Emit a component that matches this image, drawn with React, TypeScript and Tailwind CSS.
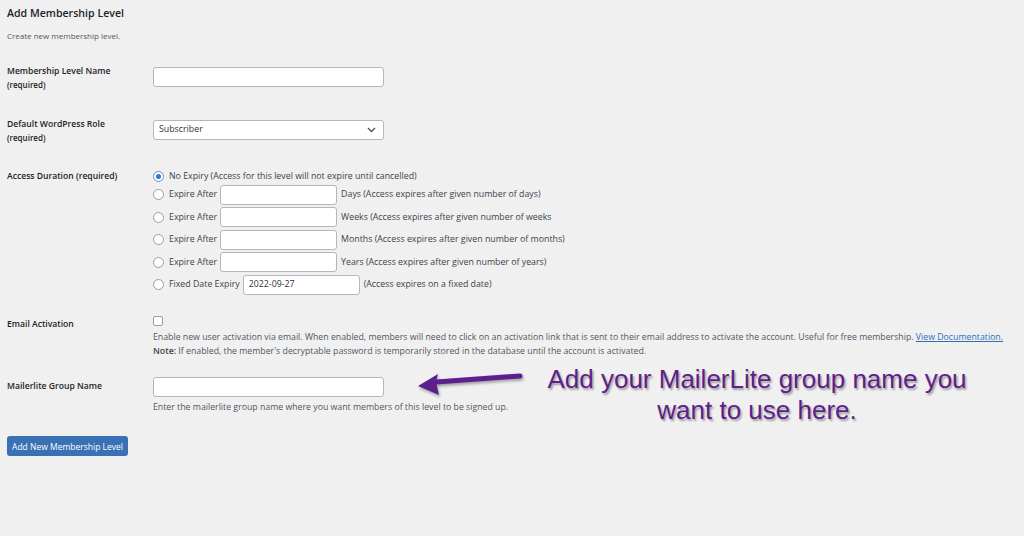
import React from "react";

const font = { fontFamily: '"Open Sans", "Noto Sans", sans-serif' };

function Radio({ checked }: { checked?: boolean }) {
  return (
    <span
      className={
        "flex h-[11px] w-[11px] shrink-0 items-center justify-center rounded-full border bg-white " +
        (checked ? "border-[#5b8fd0]" : "border-[#9a9da2]")
      }
    >
      {checked && <span className="h-[5px] w-[5px] rounded-full bg-[#3a74c4]" />}
    </span>
  );
}

function TextBox({ w, value }: { w: string; value?: string }) {
  return (
    <div
      className={
        "flex h-[20px] shrink-0 items-center rounded-[3px] border border-[#b4b7bb] bg-white px-[5px] text-[8.8px] text-[#2c3338] " +
        w
      }
    >
      {value}
    </div>
  );
}

function ExpireRow({ unit }: { unit: string }) {
  return (
    <div className="flex h-[20px] items-center">
      <Radio />
      <span className="ml-[5px] mr-[3px]">Expire After</span>
      <TextBox w="w-[117px]" />
      <span className="ml-[4px]">{unit}</span>
    </div>
  );
}

export default function App() {
  return (
    <div
      className="relative h-[536px] w-[1024px] overflow-hidden bg-[#f0f0f1] pl-[7px] text-[8.8px] leading-[13px] text-[#3c434a]"
      style={font}
    >
      <h1 className="pt-[5px] text-[10.6px] font-semibold leading-[16px] text-[#1d2327]">
        Add Membership Level
      </h1>
      <p className="mt-[9px] text-[8px] leading-[12px] text-[#50575e]">Create new membership level.</p>

      {/* Row 1 */}
      <div className="mt-[22.5px] flex">
        <div className="w-[146px] shrink-0 text-[8.6px] font-semibold text-[#1d2327]">
          <div>Membership Level Name</div>
          <div className="text-[8px]">(required)</div>
        </div>
        <div className="pt-[2.5px]">
          <TextBox w="w-[231px]" />
        </div>
      </div>

      {/* Row 2 */}
      <div className="mt-[27.5px] flex">
        <div className="w-[146px] shrink-0 text-[8.6px] font-semibold text-[#1d2327]">
          <div>Default WordPress Role</div>
          <div className="text-[8px]">(required)</div>
        </div>
        <div className="pt-[1.5px]">
          <div className="flex h-[20px] w-[231px] items-center justify-between rounded-[3px] border border-[#b4b7bb] bg-white pl-[5px] pr-[7px] text-[8.8px] text-[#2c3338]">
            <span>Subscriber</span>
            <svg width="9" height="6" viewBox="0 0 9 6">
              <path d="M1 1 L4.5 4.5 L8 1" fill="none" stroke="#50575e" strokeWidth="1.4" />
            </svg>
          </div>
        </div>
      </div>

      {/* Row 3 */}
      <div className="mt-[26px] flex">
        <div className="w-[146px] shrink-0 text-[8.6px] font-semibold text-[#1d2327]">Access Duration (required)</div>
        <div className="flex flex-col gap-[2.6px]">
          <div className="-mt-[0.5px] mb-[-0.6px] flex h-[13px] items-center">
            <Radio checked />
            <span className="ml-[5px]">No Expiry (Access for this level will not expire until cancelled)</span>
          </div>
          <ExpireRow unit="Days (Access expires after given number of days)" />
          <ExpireRow unit="Weeks (Access expires after given number of weeks" />
          <ExpireRow unit="Months (Access expires after given number of months)" />
          <ExpireRow unit="Years (Access expires after given number of years)" />
          <div className="flex h-[20px] items-center">
            <Radio />
            <span className="ml-[5px] mr-[3px]">Fixed Date Expiry</span>
            <TextBox w="w-[117px]" value="2022-09-27" />
            <span className="ml-[4px]">(Access expires on a fixed date)</span>
          </div>
        </div>
      </div>

      {/* Email activation */}
      <div className="mt-[21px] flex">
        <div className="w-[146px] shrink-0 pt-[2px] text-[8.6px] font-semibold text-[#1d2327]">Email Activation</div>
        <div className="min-w-0">
          <div className="mt-[0.5px] h-[10px] w-[10px] rounded-[2px] border border-[#9a9da2] bg-white" />
          <div className="mt-[5px] whitespace-nowrap text-[8.75px] text-[#50575e]">
            Enable new user activation via email. When enabled, members will need to click on an activation link that is
            sent to their email address to activate the account. Useful for free membership.{" "}
            <span className="text-[#2f6db5] underline">View Documentation.</span>
          </div>
          <div className="mt-[1px] whitespace-nowrap text-[8.75px] text-[#50575e]">
            <span className="font-semibold text-[#3c434a]">Note:</span> If enabled, the member's decryptable password is
            temporarily stored in the database until the account is activated.
          </div>
        </div>
      </div>

      {/* Mailerlite */}
      <div className="mt-[19px] flex">
        <div className="w-[146px] shrink-0 pt-[2.5px] text-[8.6px] font-semibold text-[#1d2327]">
          Mailerlite Group Name
        </div>
        <div>
          <TextBox w="w-[231px]" />
          <div className="mt-[4px] text-[8.75px] text-[#50575e]">
            Enter the mailerlite group name where you want members of this level to be signed up.
          </div>
        </div>
      </div>

      <button className="mt-[22px] flex h-[20px] w-[121px] items-center justify-center rounded-[3px] bg-[#3a70b4] text-[8.5px] text-white">
        Add New Membership Level
      </button>

      {/* Annotation overlay */}
      <svg
        className="absolute left-[414px] top-[368px] drop-shadow-[1.5px_2px_1.5px_rgba(0,0,0,0.35)]"
        width="112"
        height="30"
        viewBox="0 0 112 30"
      >
        <path d="M106 8 L22 14" stroke="#5c1f8e" strokeWidth="5" strokeLinecap="round" fill="none" />
        <path d="M4 18 L24 6 L22 14 L25 27 Z" fill="#5c1f8e" />
      </svg>
      <div
        className="absolute left-[500px] top-[364px] w-[514px] text-center text-[26px] leading-[31px] text-[#5e1f8b] [text-shadow:1.5px_2px_2px_rgba(0,0,0,0.35)]"
        style={{ fontFamily: '"Liberation Sans", Arial, sans-serif' }}
      >
        Add your MailerLite group name you
        <br />
        want to use here.
      </div>
    </div>
  );
}
